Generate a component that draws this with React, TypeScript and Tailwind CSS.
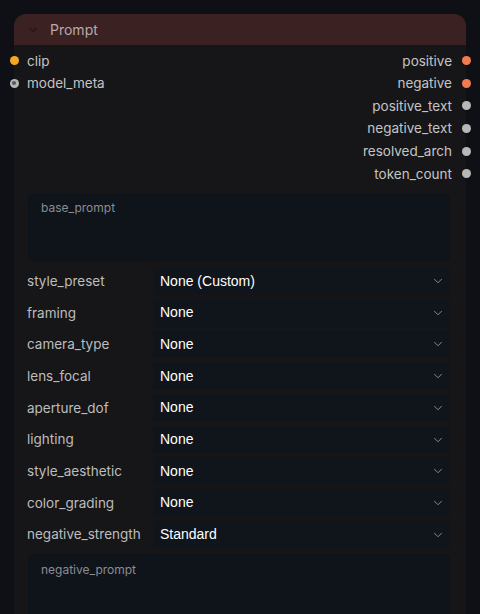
import { ChevronDown } from 'lucide-react';

const inputs = [
  { name: 'clip', color: 'bg-[#f5a623]', hollow: false },
  { name: 'model_meta', color: 'bg-[#b5b5b5]', hollow: true },
];

const outputs = [
  { name: 'positive', color: 'bg-[#f47a4f]' },
  { name: 'negative', color: 'bg-[#f47a4f]' },
  { name: 'positive_text', color: 'bg-[#b8b8b8]' },
  { name: 'negative_text', color: 'bg-[#b8b8b8]' },
  { name: 'resolved_arch', color: 'bg-[#b8b8b8]' },
  { name: 'token_count', color: 'bg-[#b8b8b8]' },
];

const widgets = [
  { label: 'style_preset', value: 'None (Custom)' },
  { label: 'framing', value: 'None' },
  { label: 'camera_type', value: 'None' },
  { label: 'lens_focal', value: 'None' },
  { label: 'aperture_dof', value: 'None' },
  { label: 'lighting', value: 'None' },
  { label: 'style_aesthetic', value: 'None' },
  { label: 'color_grading', value: 'None' },
  { label: 'negative_strength', value: 'Standard' },
];

export default function App() {
  return (
    <div
      className="h-[614px] w-[480px] overflow-hidden bg-[#0e1015] pl-[14px] pt-[14px]"
      style={{ fontFamily: 'Inter, "Noto Sans", sans-serif' }}
    >
      <div className="relative w-[452px] h-[700px] rounded-t-[12px] bg-[#161619]">
        {/* header */}
        <div className="flex h-[31px] items-center rounded-t-[12px] bg-[#3b2122] pl-[13px]">
          <ChevronDown size={12} strokeWidth={3} className="text-[#2a1616]" />
          <span className="ml-[11px] text-[14px] text-[#b9a9a9]">Prompt</span>
        </div>

        {/* slots */}
        <div className="flex justify-between pt-[4.5px]">
          <div className="flex flex-col">
            {inputs.map((s) => (
              <div key={s.name} className="relative flex h-[22.6px] items-center pl-[13px]">
                <span
                  className={`absolute left-[-4.5px] h-[9px] w-[9px] rounded-full ${s.color} flex items-center justify-center`}
                >
                  {s.hollow && <span className="h-[4px] w-[4px] rounded-full bg-[#55575c]" />}
                </span>
                <span className="text-[13.5px] text-[#c4c4c4]">{s.name}</span>
              </div>
            ))}
          </div>
          <div className="flex flex-col items-end">
            {outputs.map((s) => (
              <div key={s.name} className="relative flex h-[22.6px] items-center pr-[14px]">
                <span className="text-[13.5px] text-[#c4c4c4]">{s.name}</span>
                <span
                  className={`absolute right-[-4.5px] h-[9px] w-[9px] rounded-full ${s.color}`}
                />
              </div>
            ))}
          </div>
        </div>

        {/* base prompt */}
        <div className="ml-[14px] mr-[16px] mt-[8px] h-[69px] rounded-[6px] bg-[#0f131a] px-[13px] pt-[1px]">
          <span className="text-[12px] text-[#8a8d92]">base_prompt</span>
        </div>

        {/* combo widgets */}
        <div className="mt-[5px] flex flex-col gap-[3.7px] pl-[13px] pr-[16px]">
          {widgets.map((w) => (
            <div key={w.label} className="flex h-[28px] items-center">
              <span className="w-[126px] shrink-0 text-[13.5px] text-[#bdbdbd]">{w.label}</span>
              <div className="flex h-full flex-1 items-center justify-between rounded-[4px] bg-[#10141b] pl-[7px] pr-[5px]">
                <span
                  className="text-[14px] text-white"
                  style={{ fontFamily: '"Liberation Sans", Arial, sans-serif' }}
                >
                  {w.value}
                </span>
                <ChevronDown size={14} strokeWidth={1.5} className="text-[#9a9ca0]" />
              </div>
            </div>
          ))}
        </div>

        {/* negative prompt */}
        <div className="ml-[14px] mr-[16px] mt-[4px] h-[80px] rounded-[6px] bg-[#0f131a] px-[13px] pt-[3px]">
          <span className="text-[12px] text-[#8a8d92]">negative_prompt</span>
        </div>
      </div>
    </div>
  );
}
